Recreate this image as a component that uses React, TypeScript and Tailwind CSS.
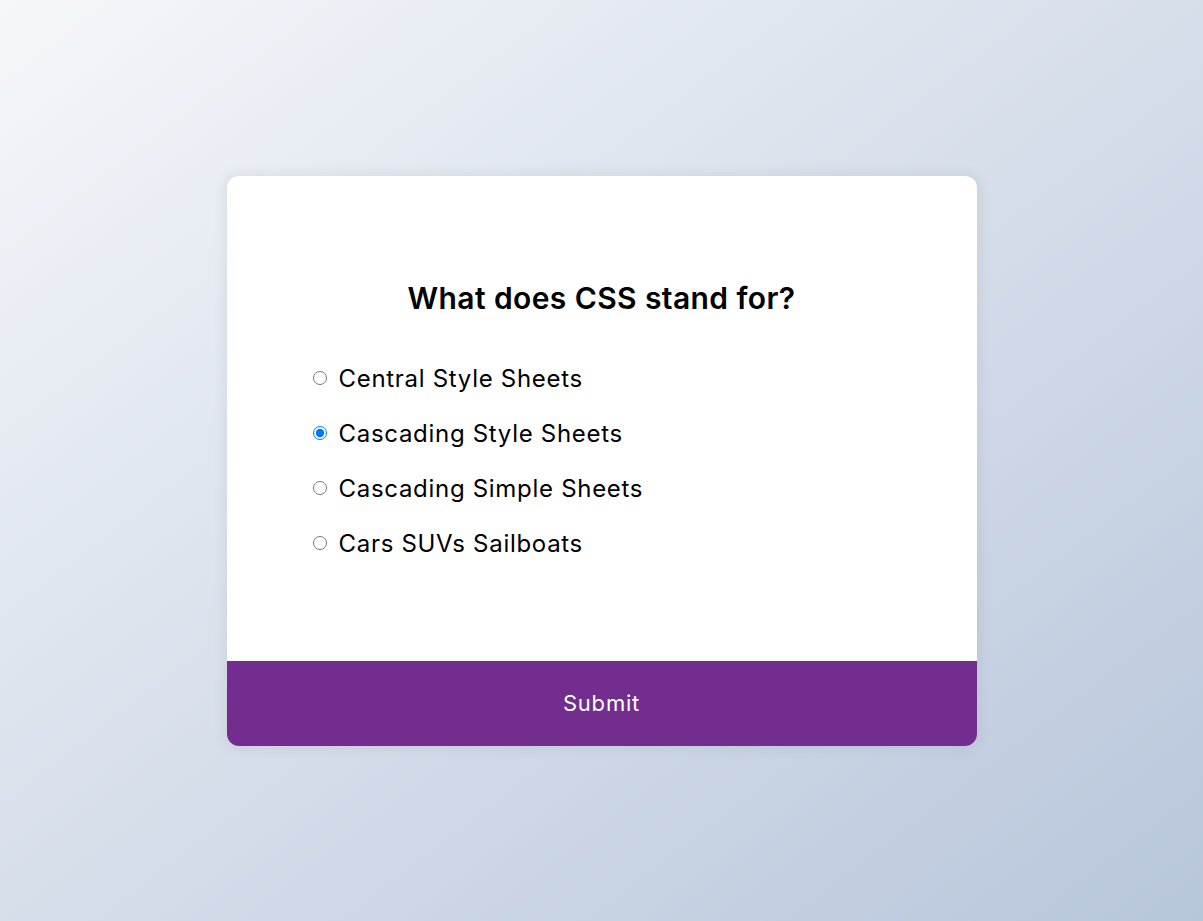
import React, { useState } from 'react';

const options = [
  { id: 'a', text: 'Central Style Sheets' },
  { id: 'b', text: 'Cascading Style Sheets' },
  { id: 'c', text: 'Cascading Simple Sheets' },
  { id: 'd', text: 'Cars SUVs Sailboats' },
];

const App: React.FC = () => {
  const [answer, setAnswer] = useState('b');

  return (
    <div className="min-h-screen flex items-center justify-center bg-[#b8c6db] bg-[linear-gradient(to_bottom_right,#f5f7fa,#b8c6db)] font-['Inter','Liberation_Sans',sans-serif]">
      <div className="w-[750px] bg-white rounded-[12px] overflow-hidden shadow-[0_0_12px_3px_rgba(100,100,100,0.1)]">
        <div className="p-[80px]">
          <h2 className="py-[20px] text-center text-[30px] leading-[45px] font-semibold text-black tracking-[0.4px]">
            What does CSS stand for?
          </h2>
          <ul className="my-[20px] flex flex-col gap-[20px]">
            {options.map((opt) => (
              <li key={opt.id} className="flex items-center h-[35px] text-[24px] text-black tracking-[0.7px]">
                <input
                  type="radio"
                  name="answer"
                  id={opt.id}
                  checked={answer === opt.id}
                  onChange={() => setAnswer(opt.id)}
                  className="ml-[6px] w-[14px] h-[14px] cursor-pointer"
                />
                <label htmlFor={opt.id} className="ml-[12px] cursor-pointer leading-[35px]">
                  {opt.text}
                </label>
              </li>
            ))}
          </ul>
        </div>
        <button className="block w-full bg-[#732d8e] text-white text-[22px] leading-[33px] py-[26px] tracking-[0.8px] cursor-pointer hover:bg-[#6a2984]">
          Submit
        </button>
      </div>
    </div>
  );
};

export default App;
